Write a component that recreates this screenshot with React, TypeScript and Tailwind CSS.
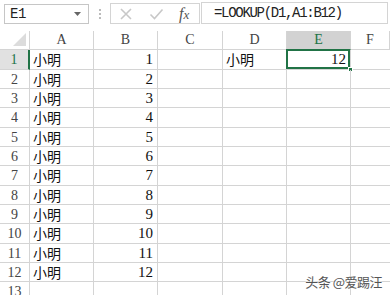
import React from "react";

const rowHeights = [20, 19, 19, 20, 19, 19, 20, 19, 19, 20, 19, 19, 19];
const cols = ["A", "B", "C", "D", "E", "F"];
const serif = { fontFamily: '"Liberation Serif", "Noto Sans CJK SC", serif' };
const cjk = { fontFamily: '"Noto Sans CJK SC", sans-serif' };

export default function App() {
  return (
    <div className="w-[390px] h-[295px] bg-white overflow-hidden relative select-none">
      {/* formula bar */}
      <div className="h-[31px] flex items-start pt-[4px] relative">
        <div className="ml-[4px] w-[85px] h-[20px] border border-[#c6c6c6] flex items-center justify-between pl-[5px] pr-[7px]">
          <span className="text-[14px] text-[#222] tracking-[-0.5px]" style={{ fontFamily: '"Liberation Mono", monospace' }}>E1</span>
          <svg width="7" height="4" viewBox="0 0 7 4"><path d="M0 0 L7 0 L3.5 4 Z" fill="#666" /></svg>
        </div>
        <div className="w-[21px] h-[20px] flex flex-col items-center justify-center gap-[2px]">
          <span className="w-[2px] h-[2px] bg-[#bbb]" />
          <span className="w-[2px] h-[2px] bg-[#bbb]" />
          <span className="w-[2px] h-[2px] bg-[#bbb]" />
        </div>
        <div className="w-[90px] h-[21px] -mt-[1px] border border-[#d4d4d4] flex items-center pl-[8px]">
          <svg width="14" height="14" viewBox="0 0 14 14" className="mr-[16px]">
            <path d="M2 2 L12 12 M12 2 L2 12" stroke="#c8c8c8" strokeWidth="1.6" />
          </svg>
          <svg width="15" height="14" viewBox="0 0 15 14" className="mr-[15px]">
            <path d="M1.5 7.5 L5.5 11.5 L13.5 2.5" stroke="#c8c8c8" strokeWidth="1.6" fill="none" />
          </svg>
          <span className="text-[16px] italic text-[#555]" style={{ fontFamily: '"Liberation Serif", serif' }}>
            f<span className="text-[13px]">x</span>
          </span>
        </div>
        <div className="ml-[1px] flex-1 mr-[2px] h-[22px] -mt-[2px] border border-[#d4d4d4] flex items-center pl-[12px]">
          <span className="text-[14px] text-[#222] tracking-[-1.3px]" style={{ fontFamily: '"Liberation Mono", monospace' }}>=LOOKUP(D1,A1:B12)</span>
        </div>
      </div>

      {/* sheet */}
      <div className="grid grid-cols-[30px_64px_64px_65px_64px_64px_1fr]">
        <div className="h-[19px] border-r border-b border-[#d4d4d4] relative bg-white">
          <svg className="absolute right-[3px] bottom-[3px]" width="13" height="13" viewBox="0 0 13 13">
            <path d="M13 0 L13 13 L0 13 Z" fill="#dcdcdc" />
          </svg>
        </div>
        {cols.map((c) => (
          <div
            key={c}
            className={`h-[19px] border-b border-r flex items-end justify-center pb-[1px] text-[14px] leading-[16px] ${
              c === "E" ? "bg-[#d2d2d2] text-[#217346] border-b-[#217346] border-r-[#d4d4d4]" : "bg-white text-[#444] border-[#d4d4d4]"
            }`}
            style={serif}
          >
            {c}
          </div>
        ))}

        {rowHeights.map((h, i) => {
          const r = i + 1;
          const sel = r === 1;
          return (
            <React.Fragment key={r}>
              <div
                className={`border-b border-r flex items-center justify-center text-[14px] ${
                  sel ? "bg-[#e1e1e1] text-[#217346] border-r-[#217346] border-r-2 border-b-[#d4d4d4]" : "bg-white text-[#444] border-[#d4d4d4]"
                }`}
                style={{ ...serif, height: h }}
              >
                {r}
              </div>
              <div className="border-b border-r border-[#d4d4d4] flex items-center pl-[3px] text-[14px] text-[#111]" style={{ ...cjk, height: h }}>
                {r <= 12 ? "小明" : ""}
              </div>
              <div className="border-b border-r border-[#d4d4d4] flex items-center justify-end pr-[4px] text-[15px] text-[#111]" style={{ ...serif, height: h }}>
                {r <= 12 ? r : ""}
              </div>
              <div className="border-b border-r border-[#d4d4d4]" style={{ height: h }} />
              <div className="border-b border-r border-[#d4d4d4] flex items-center pl-[3px] text-[14px] text-[#111]" style={{ ...cjk, height: h }}>
                {r === 1 ? "小明" : ""}
              </div>
              <div className="border-b border-r border-[#d4d4d4] relative flex items-center justify-end pr-[4px] text-[15px] text-[#111]" style={{ ...serif, height: h }}>
                {r === 1 && (
                  <>
                    <div className="absolute -left-[1px] -top-[1px] right-0 bottom-0 border-2 border-[#217346]" />
                    <div className="absolute -right-[3px] -bottom-[3px] w-[5px] h-[5px] bg-[#217346] border border-white" />
                    <span className="relative">12</span>
                  </>
                )}
              </div>
              <div className="border-b border-[#d4d4d4]" style={{ height: h }} />
            </React.Fragment>
          );
        })}
      </div>

      <div
        className="absolute right-[8px] bottom-[4px] text-[13px] text-[#555] tracking-[-0.5px]"
        style={{ ...cjk, textShadow: "0 0 2px #fff, 0 0 2px #fff" }}
      >
        头条 @爱踢汪
      </div>
    </div>
  );
}
